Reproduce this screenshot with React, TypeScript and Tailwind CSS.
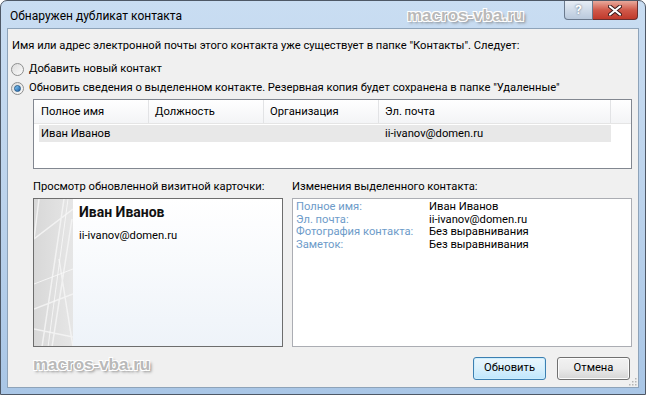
import { useState } from "react";

const font = { fontFamily: 'Roboto, "Noto Sans", sans-serif' };

function Watermark({ className }: { className: string }) {
  return (
    <div
      className={`pointer-events-none absolute select-none text-[17px] font-bold leading-[20px] text-[#b9b9b9] ${className}`}
      style={{
        fontFamily: '"Liberation Sans", Arial, sans-serif',
        textShadow:
          "1px 1px 0 #fff, -1px -1px 0 #fff, 1px -1px 0 #fff, -1px 1px 0 #fff, 2px 2px 3px #7a7a7a",
      }}
    >
      macros-vba.ru
    </div>
  );
}

function Radio({ checked, label, onClick }: { checked: boolean; label: string; onClick: () => void }) {
  return (
    <div className="flex h-[19px] items-center gap-[5px] cursor-default" onClick={onClick}>
      <span className="flex h-[13px] w-[13px] items-center justify-center rounded-full border border-[#8e8f8f] bg-gradient-to-br from-[#dcdcdc] to-[#fbfbfb]">
        {checked && (
          <span className="h-[7px] w-[7px] rounded-full bg-gradient-to-br from-[#8ad0f8] to-[#1c5fa8] border border-[#245a8a]" />
        )}
      </span>
      <span>{label}</span>
    </div>
  );
}

export default function App() {
  const [mode, setMode] = useState(1);

  const changes = [
    ["Полное имя:", "Иван Иванов"],
    ["Эл. почта:", "ii-ivanov@domen.ru"],
    ["Фотография контакта:", "Без выравнивания"],
    ["Заметок:", "Без выравнивания"],
  ];

  return (
    <div
      className="relative h-[395px] w-[646px] overflow-hidden rounded-t-[7px] border border-[#4e5866] bg-gradient-to-b from-[#c9ddf2] via-[#bcd3ec] to-[#a9c6e6] text-[11.2px] text-black"
      style={font}
    >
      {/* title bar */}
      <div className="flex h-[27px] items-center justify-between pl-[9px]">
        <span className="pt-[2px] text-[12px] text-black">Обнаружен дубликат контакта</span>
        <div className="flex self-start pr-[7px]">
          <div className="flex h-[19px] w-[29px] items-center justify-center rounded-bl-[4px] border border-t-0 border-[#6b7a8d] bg-gradient-to-b from-[#e6edf5] to-[#b9c9dc] text-[13px] font-bold text-white [text-shadow:0_0_2px_#4b5b70]">
            ?
          </div>
          <div className="flex h-[19px] w-[45px] items-center justify-center rounded-br-[4px] border border-l-0 border-t-0 border-[#6b3030] bg-gradient-to-b from-[#e8a99c] via-[#d0594a] to-[#c0392b]">
            <svg width="14" height="11" viewBox="0 0 14 11">
              <path d="M2 1.5 L12 9.5 M12 1.5 L2 9.5" stroke="#3a1a1a" strokeWidth="4" strokeLinecap="round" />
              <path d="M2 1.5 L12 9.5 M12 1.5 L2 9.5" stroke="#fff" strokeWidth="2.2" strokeLinecap="round" />
            </svg>
          </div>
        </div>
      </div>

      {/* client area */}
      <div className="relative mx-[6px] flex h-[360px] flex-col border border-[#8ea3b9] bg-[#f0f0f0] px-[2px]">
        <div className="pl-[2px] pt-[8px] leading-[17px]">
          Имя или адрес электронной почты этого контакта уже существует в папке "Контакты". Следует:
        </div>
        <div className="mt-[6px] flex flex-col pl-[1px]">
          <Radio checked={mode === 0} label="Добавить новый контакт" onClick={() => setMode(0)} />
          <Radio
            checked={mode === 1}
            label='Обновить сведения о выделенном контакте. Резервная копия будет сохранена в папке "Удаленные"'
            onClick={() => setMode(1)}
          />
        </div>

        {/* list */}
        <div className="ml-[23px] mr-[4px] mt-[1px] h-[70px] border border-[#828790] bg-white">
          <div className="flex h-[24px] items-stretch border-b border-[#e5e5e5] bg-gradient-to-b from-white to-[#f3f4f6]">
            <div className="w-[115px] border-r border-[#e2e3e5] pl-[7px] leading-[24px]">Полное имя</div>
            <div className="w-[115px] border-r border-[#e2e3e5] pl-[6px] leading-[24px]">Должность</div>
            <div className="w-[115px] border-r border-[#e2e3e5] pl-[6px] leading-[24px]">Организация</div>
            <div className="w-[232px] border-r border-[#e2e3e5] pl-[6px] leading-[24px]">Эл. почта</div>
            <div className="flex-1" />
          </div>
          <div className="ml-[5px] mt-[1px] flex h-[17px] w-[572px] items-center bg-[#e8e8e8] leading-[17px]">
            <div className="w-[110px] pl-[2px]">Иван Иванов</div>
            <div className="w-[115px]" />
            <div className="w-[115px]" />
            <div className="pl-[6px]">ii-ivanov@domen.ru</div>
          </div>
        </div>

        {/* bottom panels */}
        <div className="ml-[23px] mr-[4px] mt-[10px] flex gap-[9px]">
          <div className="flex w-[250px] flex-col">
            <div className="h-[19px] leading-[16px]">Просмотр обновленной визитной карточки:</div>
            <div className="flex h-[149px] border border-[#6d6d6d]">
              <div className="relative w-[39px] overflow-hidden bg-gradient-to-r from-[#d8d8d8] to-[#e6e6e6]">
                <svg className="absolute inset-0" width="39" height="148" viewBox="0 0 39 148">
                  <path d="M30 0 L8 148 M38 20 L18 148 M0 40 L39 10 M0 110 L39 95 M0 130 L39 138 M5 0 L0 40 M25 60 L39 148" stroke="#f4f4f4" strokeWidth="1.5" fill="none" opacity="0.9" />
                  <path d="M34 0 L14 148 M0 85 L39 70" stroke="#fafafa" strokeWidth="0.8" fill="none" />
                </svg>
              </div>
              <div className="flex-1 bg-gradient-to-b from-white to-[#eef3f9] pl-[6px] pt-[4px]">
                <div className="text-[14px] font-bold leading-[18px] text-[#111]">Иван Иванов</div>
                <div className="mt-[7px] leading-[16px]">ii-ivanov@domen.ru</div>
              </div>
            </div>
          </div>
          <div className="flex flex-1 flex-col">
            <div className="h-[19px] leading-[16px]">Изменения выделенного контакта:</div>
            <div className="h-[149px] border border-[#abadb3] bg-white pl-[3px] pt-[2px]">
              {changes.map(([k, v]) => (
                <div key={k} className="flex leading-[12.5px]">
                  <div className="w-[133px] text-[#6d9bc9]">{k}</div>
                  <div>{v}</div>
                </div>
              ))}
            </div>
          </div>
        </div>

        {/* buttons */}
        <div className="mr-[6px] mt-[10px] flex justify-end gap-[11px]">
          <button className="h-[23px] w-[73px] rounded-[3px] border border-[#3c7fb1] bg-gradient-to-b from-[#eaf6fd] via-[#d9f0fc] to-[#bee6fd] shadow-[inset_0_0_0_1px_#cdeefd]">
            Обновить
          </button>
          <button className="h-[23px] w-[73px] rounded-[3px] border border-[#707070] bg-gradient-to-b from-[#f2f2f2] via-[#ebebeb] to-[#d5d5d5] shadow-[inset_0_0_0_1px_#fcfcfc]">
            Отмена
          </button>
        </div>

        {/* resize grip */}
        <svg className="absolute bottom-[1px] right-[1px]" width="10" height="10" viewBox="0 0 10 10">
          {[
            [8, 2], [8, 5], [5, 5], [8, 8], [5, 8], [2, 8],
          ].map(([x, y]) => (
            <rect key={`${x}-${y}`} x={x} y={y} width="1.5" height="1.5" fill="#b5b5b5" />
          ))}
        </svg>

        <Watermark className="left-[25px] bottom-[12px]" />
      </div>

      <Watermark className="left-[406px] top-[5px]" />
    </div>
  );
}
